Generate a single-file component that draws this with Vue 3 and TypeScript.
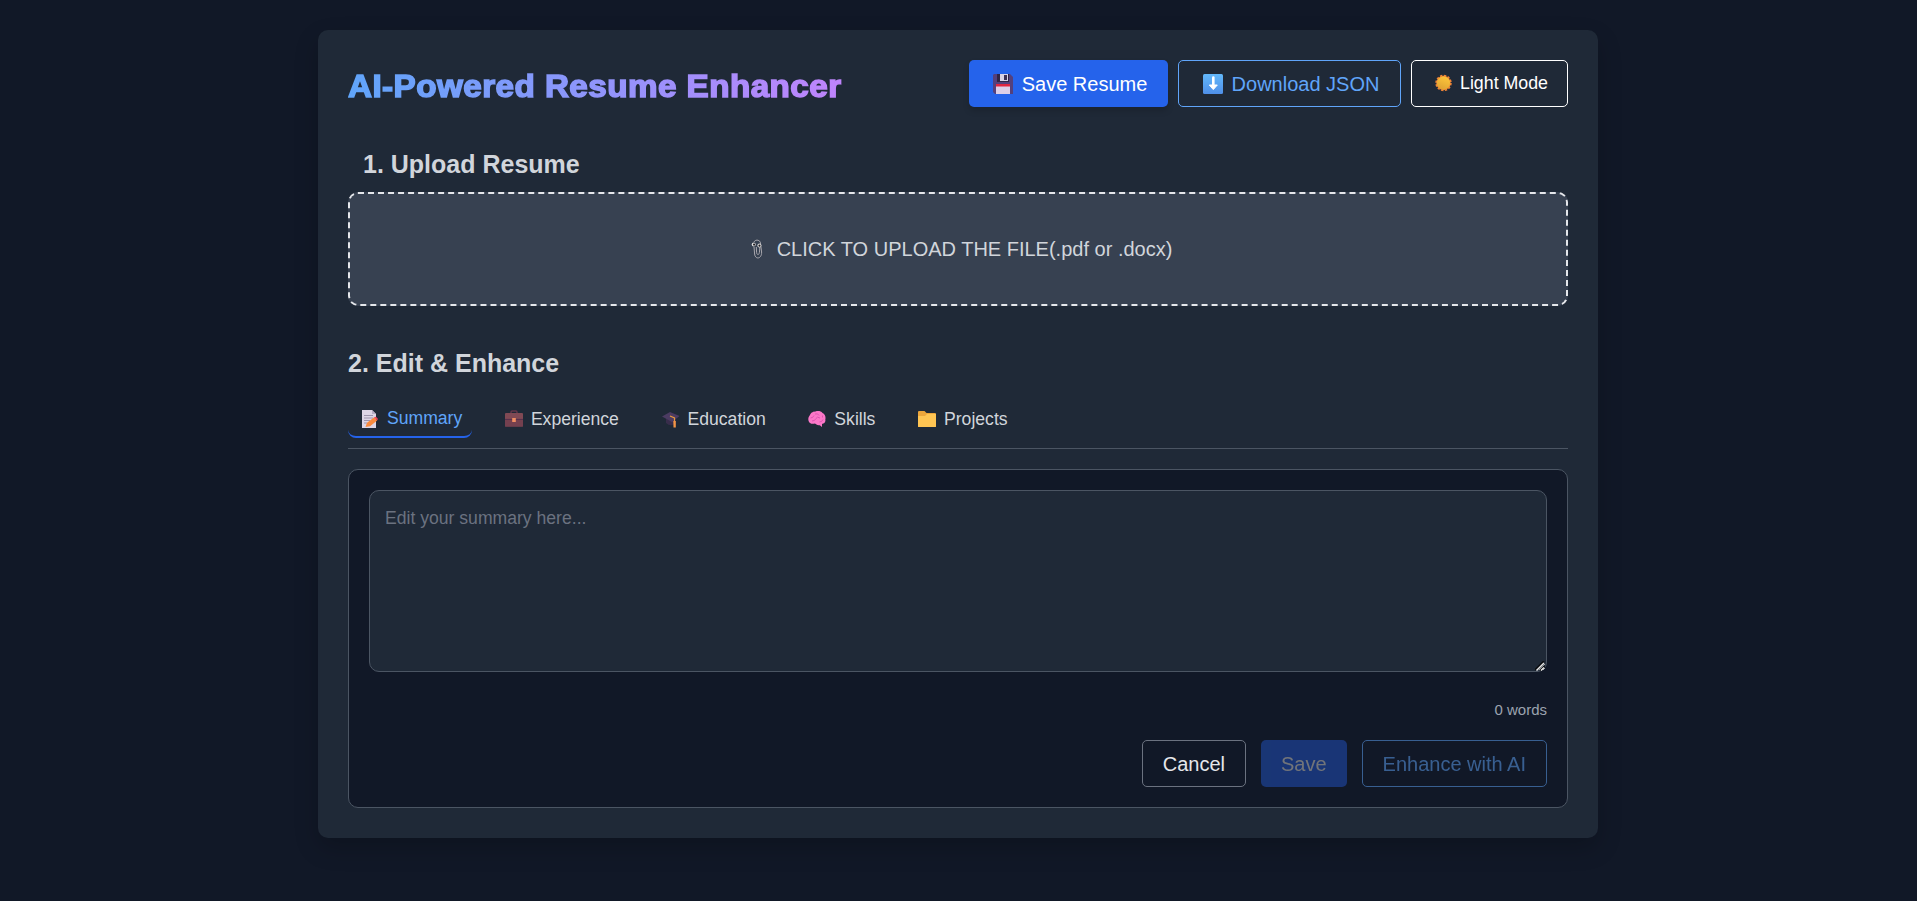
<script setup lang="ts">
import { computed, ref } from 'vue'

type TabId = 'summary' | 'experience' | 'education' | 'skills' | 'projects'

const tabs: { id: TabId; label: string }[] = [
  { id: 'summary', label: 'Summary' },
  { id: 'experience', label: 'Experience' },
  { id: 'education', label: 'Education' },
  { id: 'skills', label: 'Skills' },
  { id: 'projects', label: 'Projects' },
]

const active = ref<TabId>('summary')
const text = ref('')
const words = computed(() => text.value.split(/\s+/).filter(Boolean).length)
</script>

<template>
  <div class="page">
    <main class="card">
      <header class="header">
        <h1 class="title">AI-Powered Resume Enhancer</h1>
        <div class="actions">
          <button class="btn primary shadow">
            <svg class="icon-lg" viewBox="0 0 20 20">
              <path d="M1 0H17L20 3V20H2L0 18V1Z" fill="#54407c" />
              <path d="M4 0H16V8H4Z" fill="#2f2545" />
              <path d="M7 0H15V7H7Z" fill="#d9d2e6" />
              <path d="M11 1H14V6H11Z" fill="#3c3056" />
              <path d="M3 11H17V20H3Z" fill="#ddcfe8" />
              <path d="M3 10H17V12.5H3Z" fill="#e0243f" />
            </svg>
            <span>Save Resume</span>
          </button>
          <button class="btn outline">
            <svg class="icon-lg" viewBox="0 0 20 20">
              <defs>
                <linearGradient id="arrowTile" x1="0" y1="0" x2="0" y2="1">
                  <stop offset="0" stop-color="#62b8fb" />
                  <stop offset="1" stop-color="#4f8fe8" />
                </linearGradient>
              </defs>
              <rect width="20" height="20" rx="1.5" fill="url(#arrowTile)" />
              <path d="M10.3 3.5V12" fill="none" stroke="#fff" stroke-width="2.6" stroke-linecap="round" />
              <path d="M6.3 11H14.3L10.3 15.6Z" fill="#fff" stroke="#fff" stroke-width="1" stroke-linejoin="round" />
            </svg>
            <span>Download JSON</span>
          </button>
          <button class="btn mode">
            <svg class="icon-sun" viewBox="0 0 18 18">
              <defs>
                <linearGradient id="sunFill" x1="0.7" y1="0" x2="0.3" y2="1">
                  <stop offset="0" stop-color="#fdc63a" />
                  <stop offset="1" stop-color="#dfa233" />
                </linearGradient>
              </defs>
              <circle cx="9" cy="9" r="7.8" fill="none" stroke="#f08436" stroke-width="1.8" stroke-dasharray="2.5 1.6" />
              <circle cx="9" cy="9" r="7.6" fill="#ef8b35" />
              <circle cx="9" cy="9" r="6.9" fill="url(#sunFill)" />
            </svg>
            <span>Light Mode</span>
          </button>
        </div>
      </header>

      <h2 class="heading upload-heading">1. Upload Resume</h2>
      <label class="dropzone">
        <svg class="icon-clip" viewBox="0 0 12 20">
          <path d="M3 3C4 .6 8 .4 9.3 3.2L10.6 13C11 20 4.2 21 3.6 15L3 8M9 7L8.4 13.5C8 16.4 5.8 16 5.6 13.5L5.3 8" fill="none" stroke="#aaa8ae" stroke-width="1" />
          <circle cx="2.7" cy="5.4" r="2" fill="#ddd" /><circle cx="8.4" cy="6.4" r="2" fill="#ddd" />
          <circle cx="3.1" cy="5.6" r="1.1" fill="#241f24" /><circle cx="8.5" cy="6.7" r="1.1" fill="#241f24" />
        </svg>
        <span>CLICK TO UPLOAD THE FILE(.pdf or .docx)</span>
      </label>

      <h2 class="heading edit-heading">2. Edit &amp; Enhance</h2>
      <nav class="tabs">
        <button v-for="tab in tabs" :key="tab.id" class="tab" :class="[tab.id, { active: active === tab.id }]" @click="active = tab.id">
          <svg class="icon-tab" viewBox="0 0 18 18">
            <g v-if="tab.id === 'summary'">
              <path d="M1 0H11L15 4V18H1Z" fill="#ddd5e6" />
              <path d="M11 0L15 4H11Z" fill="#b5abc4" />
              <path d="M3 5.5H12M3 8H12M3 10.5H9M3 13H6" stroke="#9d94ad" stroke-width="1" />
              <path d="M4.5 17L6 12.8L13.2 7.2L16.2 10.4L9 16.2Z" fill="#f98a3e" />
              <path d="M13 7.3L15 6.8L17 9L16 10.6Z" fill="#f0445b" />
            </g>
            <g v-else-if="tab.id === 'experience'">
              <path d="M6 4V2.2Q6 1 7.2 1H10.8Q12 1 12 2.2V4" fill="none" stroke="#63354a" stroke-width="1.5" />
              <rect y="3" width="18" height="13.6" rx="1" fill="#804954" />
              <path d="M0 10H18V16.6H0Z" fill="#74404f" />
              <path d="M0 9.4H18" stroke="#542f4b" stroke-width="1" />
              <rect x="7.2" y="8" width="3.6" height="4" fill="#f08e62" />
            </g>
            <g v-else-if="tab.id === 'education'">
              <path d="M4 8V13Q9 17.5 13.5 13V8Z" fill="#382d4b" />
              <path d="M0 6.5L8 2L17.5 6L10 12Z" fill="#4b3b62" />
              <path d="M8 6L12.5 8V12" fill="none" stroke="#e79a3b" stroke-width="1.2" />
              <path d="M11.3 11H13.8V17.5H11.5Z" fill="#f29447" />
            </g>
            <g v-else-if="tab.id === 'skills'">
              <path d="M2 13C-.5 11 0 7 2 5C3 2 6 1.5 7.5 1.5C10 .5 13 1 14.5 3C17 4 18 7 17.3 9.5C18 12 16 13.7 14 14V17L11.8 15.2C9 15.5 8 14.5 7 13.6C5 14 3.5 14 2 13Z" fill="#fb77c8" />
              <path d="M2.5 8Q5 8 6 5.5M7 4Q10 3 11 5.5M4 11Q7 11 8 8.5T12 8M11.5 12Q14 12 15 9.5M14.5 5.5V7.5" fill="none" stroke="#d94faf" stroke-width=".9" />
            </g>
            <g v-else>
              <path d="M0 2Q0 1 1 1H6.5L8.5 3H17Q18 3 18 4V17H0Z" fill="#eda63b" />
              <path d="M0 6H7L9 4H18V16Q18 17 17 17H1Q0 17 0 16Z" fill="#ffc553" />
            </g>
          </svg>
          <span>{{ tab.label }}</span>
        </button>
      </nav>

      <section class="panel">
        <div class="editor-wrap">
          <textarea v-model="text" class="editor" placeholder="Edit your summary here..."></textarea>
          <svg class="grip" viewBox="0 0 10 10">
            <path d="M0 9L9 0M5 9.5L9.5 5" stroke="#0b0d10" stroke-width="1.6" />
            <path d="M1.5 9.5L9 2M6 9.5L9 6.5" stroke="#e8e8e8" stroke-width="1.5" />
          </svg>
        </div>
        <p class="count">{{ words }} words</p>
        <div class="footer">
          <button class="btn cancel">Cancel</button>
          <button class="btn primary" disabled>Save</button>
          <button class="btn outline" disabled>Enhance with AI</button>
        </div>
      </section>
    </main>
  </div>
</template>

<style>
body {
  background: #111827;
}
</style>

<style scoped>
* {
  box-sizing: border-box;
}
.page {
  min-height: 901px;
  padding: 30px 0 0 318px;
  background: #111827;
  font-family: Arial, "Liberation Sans", sans-serif;
  color: #d1d5db;
}
.card {
  width: 1280px;
  height: 808px;
  padding: 30px;
  border-radius: 10px;
  background: #1f2937;
  box-shadow: 0 10px 25px rgba(0, 0, 0, 0.2);
}
.header {
  display: flex;
  justify-content: space-between;
  align-items: center;
  height: 47px;
}
.title {
  margin: 5px 0 0;
  font-family: "Arial Black", "Liberation Sans", sans-serif;
  font-size: 30.5px;
  line-height: 44px;
  font-weight: 900;
  letter-spacing: 0.4px;
  white-space: nowrap;
  color: transparent;
  -webkit-text-stroke: 1.5px transparent;
  background: linear-gradient(to right, #60a5fa, #c084fc);
  background-clip: text;
  transform: scaleX(1.09);
  transform-origin: left center;
}
.actions {
  display: flex;
  gap: 10px;
}
.btn {
  display: flex;
  align-items: center;
  justify-content: center;
  height: 47px;
  padding: 1px 20px 0;
  border: 1px solid transparent;
  border-radius: 5px;
  background: transparent;
  font: 20px Arial, "Liberation Sans", sans-serif;
  white-space: nowrap;
}
.primary {
  border: 0;
  background: #2563eb;
  color: #fff;
}
.shadow {
  width: 199px;
  box-shadow: 0 4px 6px rgba(0, 0, 0, 0.15);
}
.outline {
  border-color: #60a5fa;
  color: #60a5fa;
}
.actions .outline {
  width: 223px;
}
.mode {
  width: 157px;
  border-color: #fff;
  color: #fff;
  font-size: 17.8px;
  padding: 0 19px 1px;
}
.icon-lg {
  width: 20px;
  height: 20px;
  margin: 0 9px 0 3px;
}
.icon-sun {
  width: 18px;
  height: 18px;
  margin: 0 8px 0 4px;
}
.heading {
  margin: 0;
  font-size: 25px;
  line-height: 30px;
  font-weight: 700;
}
.upload-heading {
  margin: 42px 0 13px 15px;
}
.dropzone {
  display: flex;
  align-items: center;
  justify-content: center;
  height: 114px;
  border: 2px dashed #e5e7eb;
  border-radius: 10px;
  background: #374151;
  font-size: 20px;
}
.icon-clip {
  width: 12px;
  height: 20px;
  margin: 0 14px 0 7px;
}
.edit-heading {
  margin-top: 42px;
}
.tabs {
  display: flex;
  gap: 19.6px;
  align-items: flex-start;
  height: 48px;
  margin-top: 23px;
  border-bottom: 1px solid #4b5563;
}
.tab {
  display: flex;
  align-items: center;
  height: 37px;
  padding: 0 10px 1px 13px;
  border: 0;
  border-radius: 8px;
  background: transparent;
  color: #d1d5db;
  font: 17.6px Arial, "Liberation Sans", sans-serif;
}
.tab.active {
  padding-top: 1px;
  border-bottom: 2px solid #2563eb;
  color: #60a5fa;
}
.icon-tab {
  width: 18px;
  height: 18px;
  margin-right: 8px;
}
.panel {
  height: 339px;
  margin-top: 20px;
  padding: 20px;
  border: 1px solid #4b5563;
  border-radius: 10px;
  background: #111827;
}
.editor-wrap {
  position: relative;
}
.grip {
  position: absolute;
  right: 2px;
  bottom: 1px;
  width: 10px;
  height: 10px;
  pointer-events: none;
}
.editor {
  display: block;
  width: 100%;
  height: 182px;
  padding: 15px;
  border: 1px solid #4b5563;
  border-radius: 10px;
  background: #1f2937;
  color: #fff;
  font: 17.6px/24px Arial, "Liberation Sans", sans-serif;
  outline: 0;
}
.editor::placeholder {
  color: #6b7280;
}
.count {
  margin: 28px 0 20px;
  font-size: 15px;
  line-height: 20px;
  text-align: right;
  color: #9ca3af;
}
.footer {
  display: flex;
  justify-content: flex-end;
  gap: 15px;
}
.cancel {
  border-color: #6b7280;
  color: #e5e7eb;
}
.btn:disabled {
  opacity: 0.5;
}
.primary:disabled {
  background: #2253c4;
  color: #d1cfcb;
}
</style>
